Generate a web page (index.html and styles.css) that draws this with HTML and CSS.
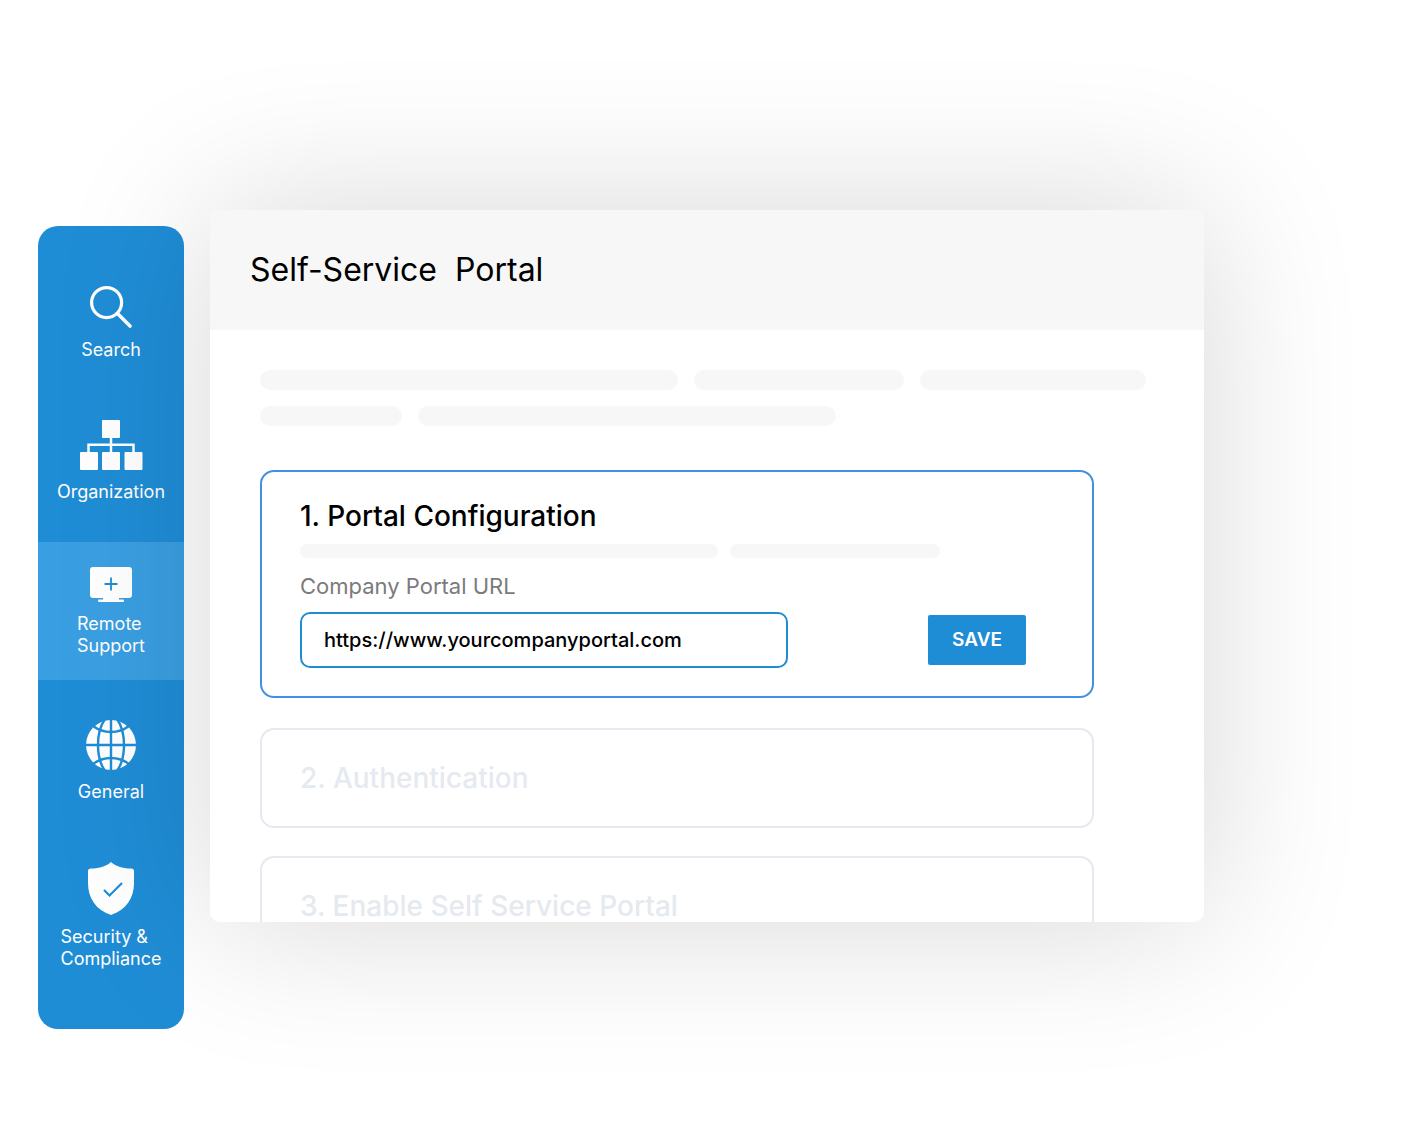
FILE: index.html
```html
<!DOCTYPE html>
<html lang="en">
<head>
    <meta charset="UTF-8">
    <meta name="viewport" content="width=device-width, initial-scale=1.0">
    <title>Self-Service Portal</title>
    <link rel="stylesheet" href="styles.css">
</head>
<body>
    <nav class="sidebar">
        <a class="nav-item" href="#search">
            <svg width="42" height="42" viewBox="0 0 42 42" fill="none" stroke="#fff" stroke-linecap="round">
                <circle cx="16.6" cy="16.6" r="15" stroke-width="3.2"/>
                <path d="M27.5 27.5L40 40" stroke-width="3.6"/>
            </svg>
            <span>Search</span>
        </a>
        <a class="nav-item" href="#organization">
            <svg width="64" height="50" viewBox="0 0 64 50" fill="#fff">
                <rect x="23" width="18" height="18" rx="1"/>
                <rect x="1" y="32" width="18" height="18" rx="1"/>
                <rect x="23" y="32" width="18" height="18" rx="1"/>
                <rect x="45.5" y="32" width="18" height="18" rx="1"/>
                <path d="M32 17v16M9.500 33v-8.300h45V33" fill="none" stroke="#fff" stroke-width="2.5"/>
            </svg>
            <span>Organization</span>
        </a>
        <a class="nav-item active" href="#remote">
            <svg width="44" height="35" viewBox="0 0 44 35" fill="#fff">
                <rect x="1" width="42" height="31" rx="3"/>
                <path d="M14 30h16v2.500h4q1 0 1 1.200t-1 1.200H10q-1 0-1-1.200t1-1.200h4z"/>
                <path d="M22 10.500v13M15.500 17h13" stroke="#1f8dd6" stroke-width="1.8"/>
            </svg>
            <span>Remote<br>Support</span>
        </a>
        <a class="nav-item" href="#general">
            <svg width="50" height="50" viewBox="0 0 50 50">
                <circle cx="25" cy="25" r="25" fill="#fff"/>
                <g fill="none" stroke="#1f8dd6" stroke-width="2.4">
                    <path d="M25 0v50M0 25h50"/>
                    <path d="M19-1Q12 9 12 25t7 26M31-1q7 10 7 26t-7 26"/>
                    <path d="M7 6q8 6 18 6t18-6M7 44q8-6 18-6t18 6"/>
                </g>
            </svg>
            <span>General</span>
        </a>
        <a class="nav-item" href="#security">
            <svg width="46" height="53" viewBox="0 0 46 53">
                <path d="M23 0c4.500 4 11 6.500 20 6.500q3 0 3 2.500v12c0 15-8 27-23 32C8 48 0 36 0 21V9q0-2.500 3-2.500C12 6.500 18.500 4 23 0z" fill="#fff"/>
                <path d="M16 28l5.500 5.500L34 21" fill="none" stroke="#1f8dd6" stroke-width="2.2"/>
            </svg>
            <span>Security &amp;<br>Compliance</span>
        </a>
    </nav>

    <main class="panel">
        <header class="panel-header">
            <h1>Self-Service&nbsp; Portal</h1>
        </header>
        <div class="panel-body">
            <div class="lines">
                <div class="line-row">
                    <span class="line long"></span>
                    <span class="line medium"></span>
                    <span class="line wide"></span>
                </div>
                <div class="line-row">
                    <span class="line short"></span>
                    <span class="line long"></span>
                </div>
            </div>

            <section class="card active">
                <h2>1. Portal Configuration</h2>
                <div class="line-row small">
                    <span class="line long"></span>
                    <span class="line medium"></span>
                </div>
                <form>
                    <label for="portal-url">Company Portal URL</label>
                    <div class="form-row">
                        <input type="text" id="portal-url" value="https://www.yourcompanyportal.com">
                        <button type="button">SAVE</button>
                    </div>
                </form>
            </section>

            <section class="card">
                <h2>2. Authentication</h2>
            </section>

            <section class="card cut">
                <h2>3. Enable Self Service Portal</h2>
            </section>
        </div>
    </main>
</body>
</html>
```

FILE: styles.css
```css
:root{
    --primary-color: #1f8dd6;
    --active-color: #3a9fe2;
    --line-color: #f7f7f7;
    --muted-color: #e4eaf0;
}

*{
    font-family: 'Inter', sans-serif;
    box-sizing: border-box;
    margin: 0;
}

body{
    min-height: 100vh;
    padding: 210px 210px 100px 38px;
    background-color: #fff;
    display: flex;
    align-items: flex-start;
    gap: 26px;
}

.sidebar{
    flex: 0 0 146px;
    margin-top: 16px;
    padding: 40px 0;
    border-radius: 20px;
    background-color: var(--primary-color);
    display: flex;
    flex-direction: column;
    gap: 20px;
}

.nav-item{
    padding: 20px 0 19px;
    color: #fff;
    font-size: 18px;
    line-height: 22px;
    text-decoration: none;
    display: flex;
    flex-direction: column;
    align-items: center;
    gap: 11px;
}

.nav-item.active{
    padding: 25px 0 23px;
    background-color: var(--active-color);
}

.panel{
    flex: 1;
    min-width: 0;
    border-radius: 10px;
    background-color: #fff;
    box-shadow: 0 0 160px rgba(0, 0, 0, 0.16);
    overflow: hidden;
}

.panel-header{
    padding: 40px;
    background-color: var(--line-color);
}

.panel-header h1{
    font-size: 32px;
    font-weight: 400;
    line-height: 40px;
}

.panel-body{
    padding: 40px 50px 0;
}

.lines{
    margin-bottom: 44px;
    display: flex;
    flex-direction: column;
    gap: 16px;
}

.line-row{
    display: flex;
    gap: 16px;
}

.line{
    height: 20px;
    border-radius: 10px;
    background-color: var(--line-color);
}

.line.short{
    width: 142px;
}

.line.medium{
    width: 210px;
}

.line.wide{
    width: 226px;
}

.line.long{
    width: 418px;
}

.line-row.small{
    margin: 12px 0 14px;
    gap: 12px;
}

.line-row.small .line{
    height: 14px;
}

.card{
    margin: 0 60px 28px 0;
    padding: 32px 38px;
    border: 2px solid var(--muted-color);
    border-radius: 14px;
    color: var(--muted-color);
}

.card h2{
    font-size: 28px;
    font-weight: 500;
    line-height: 32px;
}

.card.active{
    margin-bottom: 30px;
    padding: 28px 66px 28px 38px;
    border-color: #4490e0;
    color: #000;
}

/* last card runs off the bottom of the panel */
.card.cut{
    margin-bottom: 0;
    padding-bottom: 0;
    border-bottom: 0;
    border-radius: 14px 14px 0 0;
}

label{
    margin-bottom: 12px;
    display: block;
    color: #7b7b7b;
    font-size: 22px;
    line-height: 28px;
}

.form-row{
    display: flex;
    align-items: center;
    justify-content: space-between;
    gap: 24px;
}

input{
    width: 488px;
    min-width: 0;
    height: 56px;
    padding: 0 22px;
    border: 2px solid var(--primary-color);
    border-radius: 10px;
    font-size: 20px;
    font-weight: 500;
    color: #000;
}

button{
    padding: 13px 24px;
    border: 0;
    border-radius: 2px;
    background-color: var(--primary-color);
    color: #fff;
    font-size: 19px;
    font-weight: 600;
    line-height: 24px;
}
```
